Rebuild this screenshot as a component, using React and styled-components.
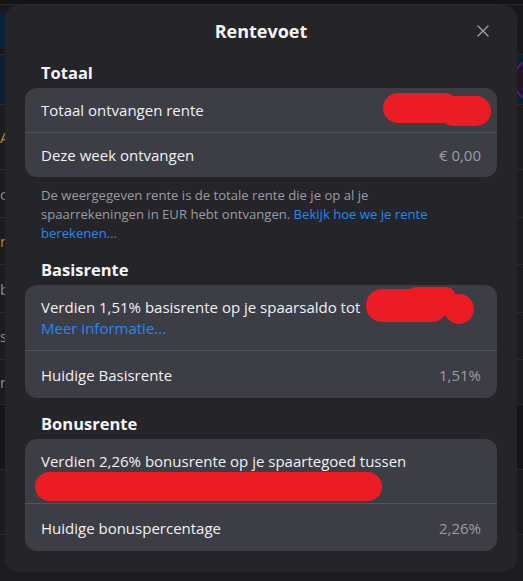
import { createGlobalStyle } from 'styled-components';
import styled from 'styled-components';
import { X } from 'lucide-react';

const GlobalStyle = createGlobalStyle`
    * { box-sizing: border-box; }
    body {
        margin: 0;
        background: #17171a;
        font-family: "Open Sans", "Noto Sans", sans-serif;
        color: #f1f1f3;
    }
`;

const Page = styled.div`
    position: relative;
    width: 523px;
    height: 581px;
    overflow: hidden;
    background: #1c1c1f;
`;

const BgRow = styled.div`
    height: ${p => p.h}px;
    background: ${p => p.bg || 'transparent'};
    border-bottom: 1px solid #2a2a2e;
    display: flex;
    justify-content: space-between;
    align-items: center;
    font-size: 15px;
    color: ${p => p.color || '#8a8a90'};
`;

const BgDot = styled.span`
    width: 46px;
    height: 46px;
    border-radius: 50%;
    margin: 0 -36px;
    border: 2px solid ${p => p.color};
    background: ${p => p.fill};
`;

const Overlay = styled.div`
    position: absolute;
    inset: 0;
    padding: 5px 6px 0 5px;
`;

const Modal = styled.section`
    width: 512px;
    background: #252529;
    border-radius: 14px;
    padding: 0 20px 21px;
`;

const Header = styled.header`
    height: 51px;
    display: grid;
    grid-template-columns: 1fr auto 1fr;
    align-items: center;
`;

const Title = styled.h1`
    grid-column: 2;
    margin: 0;
    font-size: 18px;
    font-weight: 700;
    color: #f4f4f6;
`;

const Close = styled.button`
    justify-self: end;
    margin-right: 4px;
    background: none;
    border: 0;
    padding: 0;
    color: #a2a2a8;
    display: flex;
`;

const SectionTitle = styled.h2`
    margin: ${p => p.top || 0}px 0 4px;
    padding-left: 16px;
    font-size: 16.5px;
    line-height: 22px;
    font-weight: 700;
    color: #f4f4f6;
`;

const Card = styled.div`
    background: #3d3d45;
    border-radius: 12px;
    overflow: hidden;
`;

const Row = styled.div`
    display: flex;
    justify-content: space-between;
    align-items: center;
    padding: ${p => p.pad || '12px 16px'};
    font-size: 15px;
    line-height: 20px;
    & + & {
        border-top: 1px solid #54545b;
    }
`;

const Stack = styled.div`
    display: flex;
    flex-direction: column;
    align-items: flex-start;
`;

const Value = styled.span`
    color: #9c9ca3;
`;

const Link = styled.a`
    color: #2688f0;
    text-decoration: none;
    cursor: pointer;
`;

const Note = styled.p`
    margin: 9px 44px 0 16px;
    font-size: 13.1px;
    line-height: 19px;
    color: #9b9ba1;
`;

const Blob = styled.svg`
    display: ${p => p.inline ? 'inline-block' : 'block'};
    vertical-align: middle;
    margin: ${p => p.m};
`;

const Bar = styled.div`
    width: 347px;
    height: 29px;
    margin: 1px 0 0 -6px;
    border-radius: 15px;
    background: #ec1c24;
`;

const RED = '#ec1c24';

export default function App() {
    return (
        <>
            <GlobalStyle />
            <Page>
                <BgRow h={5} bg="#141416" />
                <BgRow h={50} bg="#19191c">
                    <BgDot color="#0a2442" fill="#08213c" />
                </BgRow>
                <BgRow h={50} bg="#0b2035">
                    <span />
                    <BgDot color="#5a1a6a" fill="#241428" />
                </BgRow>
                <BgRow h={65} color="#c08a2a">A</BgRow>
                <BgRow h={48}>c</BgRow>
                <BgRow h={47} color="#b08a3a">n</BgRow>
                <BgRow h={48}>b</BgRow>
                <BgRow h={47}>s</BgRow>
                <BgRow h={45}>n</BgRow>
                <BgRow h={65} bg="#151517" />
                <BgRow h={65} bg="#1b1b1e" />
                <Overlay>
                    <Modal>
                        <Header>
                            <Title>Rentevoet</Title>
                            <Close aria-label="Sluiten">
                                <X size={20} strokeWidth={1.5} />
                            </Close>
                        </Header>

                        <SectionTitle top={6}>Totaal</SectionTitle>
                        <Card>
                            <Row>
                                <span>Totaal ontvangen rente</span>
                                <Blob width="108" height="34" m="-7px -10px -7px 0">
                                    <rect x="0" y="0" width="76" height="30" rx="15" fill={RED} />
                                    <rect x="56" y="3" width="52" height="30" rx="15" fill={RED} />
                                </Blob>
                            </Row>
                            <Row>
                                <span>Deze week ontvangen</span>
                                <Value>€ 0,00</Value>
                            </Row>
                        </Card>
                        <Note>
                            De weergegeven rente is de totale rente die je op al je spaarrekeningen in EUR hebt ontvangen. <Link>Bekijk hoe we je rente berekenen...</Link>
                        </Note>

                        <SectionTitle top={16}>Basisrente</SectionTitle>
                        <Card>
                            <Row>
                                <Stack>
                                    <span>
                                        Verdien 1,51% basisrente op je spaarsaldo tot
                                        <Blob inline width="108" height="39" m="-12px 0 -8px 6px">
                                            <rect x="0" y="2" width="82" height="33" rx="16" fill={RED} />
                                            <rect x="40" y="0" width="50" height="20" rx="10" fill={RED} />
                                            <circle cx="93" cy="22" r="15" fill={RED} />
                                        </Blob>
                                    </span>
                                    <Link>Meer informatie...</Link>
                                </Stack>
                            </Row>
                            <Row pad="14px 16px 13px">
                                <span>Huidige Basisrente</span>
                                <Value>1,51%</Value>
                            </Row>
                        </Card>

                        <SectionTitle top={15}>Bonusrente</SectionTitle>
                        <Card>
                            <Row pad="12px 16px 2px">
                                <Stack>
                                    <span>Verdien 2,26% bonusrente op je spaartegoed tussen</span>
                                    <Bar />
                                </Stack>
                            </Row>
                            <Row pad="14px 16px 13px">
                                <span>Huidige bonuspercentage</span>
                                <Value>2,26%</Value>
                            </Row>
                        </Card>
                    </Modal>
                </Overlay>
            </Page>
        </>
    );
}
